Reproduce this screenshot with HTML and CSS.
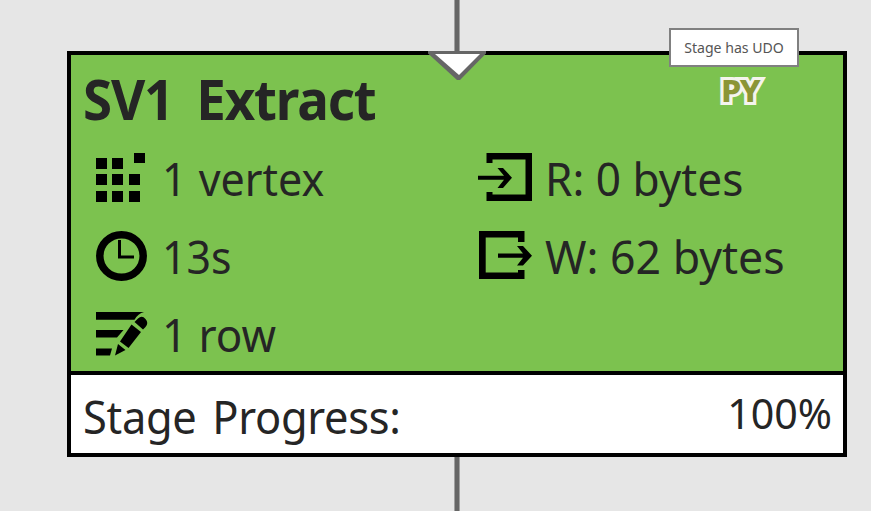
FILE: index.html
```html
<!DOCTYPE html>
<html lang="en">
<head>
<meta charset="utf-8">
<title>SV1 Extract</title>
<link rel="stylesheet" href="styles.css">
</head>
<body>
<main class="graph">
  <div class="connector connector-in"></div>
  <section class="stage">
    <svg class="arrowhead" width="60" height="31" viewBox="0 0 60 31"><path d="M1 0H59V2.500L33 29H30L1 2.500Z" fill="#666"/><path d="M8 3H53L32 24Z" fill="#fff"/></svg>
    <div class="details">
      <h1 class="title"><span class="fit name">SV1 Extract</span></h1>
      <div class="metrics">
        <div class="metric">
          <svg class="icon" width="56" height="56" viewBox="0 0 56 56"><path d="M1 8h11v11H1zM17 8h11v11H17zM39 3h11v10H39zM1 24h11v11H1zM17 24h11v11H17zM34 24h11v11H34zM1 41h11v11H1zM17 41h11v11H17zM34 41h11v11H34z"/></svg>
          <span class="fit vertex">1 vertex</span>
        </div>
        <div class="metric">
          <svg class="icon" width="56" height="56" viewBox="0 0 56 56"><path d="M10.500 13V3H56V51H10.500V42H16.500V44.500H49.500V9.500H16.500V13ZM2 25.700H28L21.500 18H27L36 27.700L27 38H21.500L28 29.700H2Z"/></svg>
          <span class="fit read">R: 0 bytes</span>
        </div>
        <div class="metric">
          <svg class="icon" width="56" height="56" viewBox="0 0 56 56"><ellipse cx="26.500" cy="28" rx="21.700" ry="21.300" fill="none" stroke="#000" stroke-width="7.500"/><path d="M23 12h3v15.500h13v3H23z"/></svg>
          <span class="fit secs">13s</span>
        </div>
        <div class="metric">
          <svg class="icon" width="56" height="56" viewBox="0 0 56 56"><path d="M3 3H48.500V14H42V9.500H9.700V44.500H42V42H48.500V51H3ZM22 25.500H47L41 18H47L56 27.700L47 37.500H41L47 29.700H22Z"/></svg>
          <span class="fit write">W: 62 bytes</span>
        </div>
        <div class="metric">
          <svg class="icon" width="56" height="56" viewBox="0 0 56 56"><path d="M1 6H49Q43 7.500 39.500 13.700H1ZM1 24H28.500L22 31.500H1ZM1 42.500H17L15 49.500H1ZM36.500 18.500L46 26L33.500 42L25 35.500ZM23 38L30.500 44L20 49.500ZM39.500 16L43 12.500Q47 9 50.500 13Q54 17 50.500 21L48 23.500Z"/></svg>
          <span class="fit rows">1 row</span>
        </div>
      </div>
    </div>
    <div class="progress">
      <span class="fit label">Stage Progress:</span>
      <span class="fit value">100%</span>
    </div>
    <div class="badge">PY</div>
    <div class="tooltip"><span class="fit tip">Stage has UDO</span></div>
  </section>
  <div class="connector connector-out"></div>
</main>
</body>
</html>
```
FILE: styles.css
```css
* { box-sizing: border-box; }
body {
  margin: 0;
  background: #e6e6e6;
  color: #252525;
  font-family: "Noto Sans", sans-serif;
}
.graph { width: 871px; height: 511px; overflow: hidden; }
.connector {
  width: 6px;
  margin-left: 454px;
  border: solid #a0a0a0;
  border-width: 0 1px;
  background: #666;
}
.connector-in { height: 51px; }
.connector-out { height: 54px; }
.stage {
  position: relative;
  width: 780px;
  height: 406px;
  margin-left: 67px;
  border: 4px solid #000;
  background: #7cc24f;
}
.fit { display: inline-block; transform-origin: 0 50%; white-space: nowrap; }
.name { transform: scaleX(0.96); letter-spacing: -1.2px; word-spacing: 11px; }
.vertex { transform: scaleX(0.935); word-spacing: 1px; }
.secs { transform: scaleX(0.93); }
.rows { transform: scaleX(0.955); }
.read { transform: scaleX(0.96); }
.write { transform: scaleX(0.97); }
.arrowhead { position: absolute; left: 356px; top: -4px; }
.details { height: 320px; border-bottom: 4px solid #000; overflow: hidden; }
.title {
  height: 83px;
  margin: 0;
  padding: 3px 0 0 12px;
  font-size: 55px;
  line-height: 82px;
}
.metrics {
  display: grid;
  grid-template-columns: 381px 1fr;
  grid-auto-rows: 78px;
  padding-left: 24px;
}
.metric { display: flex; font-size: 46px; line-height: 80px; }
.icon { flex: none; margin: 12px 11px 0 0; }
.metric:nth-child(even) .icon { margin-right: 13px; }
.progress {
  display: flex;
  justify-content: space-between;
  height: 78px;
  padding: 0 11px 0 12px;
  background: #fff;
}
.label {
  font-size: 46px;
  line-height: 82px;
  letter-spacing: -0.3px;
  word-spacing: 5px;
  transform: scaleX(0.943);
}
.value {
  font-size: 42px;
  line-height: 76px;
  transform: scaleX(0.98);
  transform-origin: 100% 50%;
}
.badge {
  position: absolute;
  left: 650px;
  top: 15px;
  color: #8b9536;
  font-size: 30px;
  font-weight: 800;
  line-height: 42px;
  letter-spacing: -1.500px;
  transform: scaleX(1.08);
  transform-origin: 0 50%;
  -webkit-text-stroke: 6px #f4f4ee;
  paint-order: stroke fill;
}
.tooltip {
  position: absolute;
  left: 598px;
  top: -27px;
  width: 130px;
  height: 39px;
  border: 2px solid #808080;
  background: #fff;
  color: #555;
  font-size: 15px;
  line-height: 35px;
  text-align: center;
  white-space: nowrap;
}
.tip { transform: scaleX(0.94); transform-origin: 50% 50%; }
```
